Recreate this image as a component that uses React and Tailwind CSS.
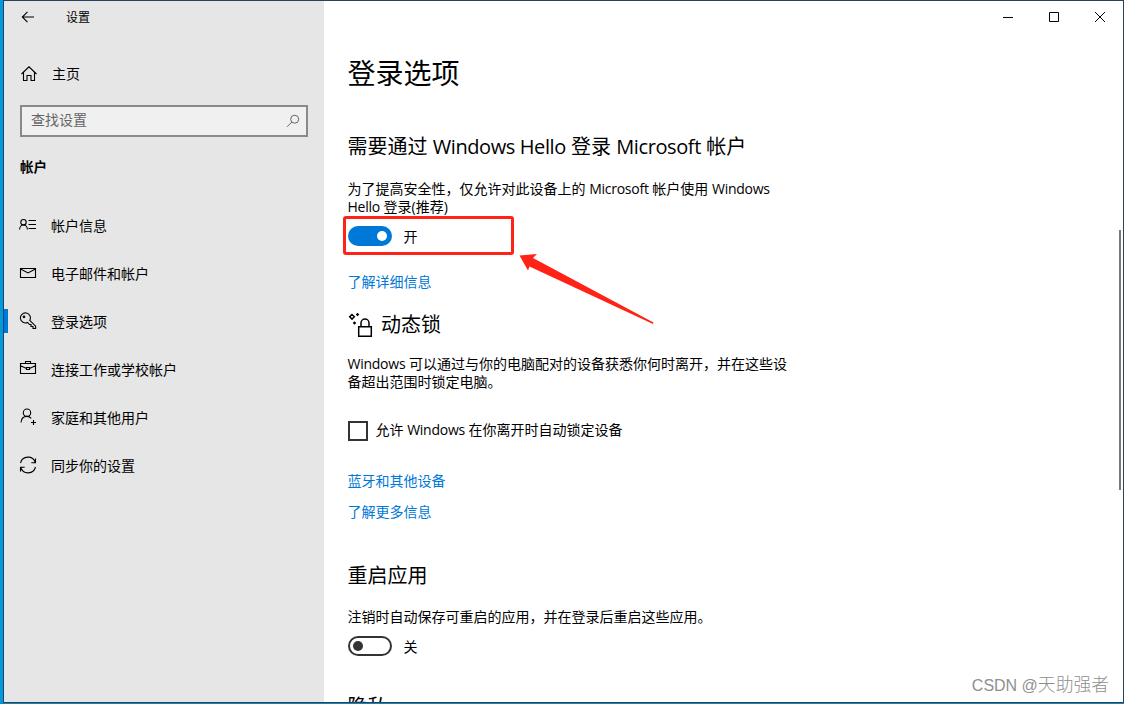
import React from "react";

const Icon = ({ children, className, box = 18, width = 1.1 }) => (
  <svg
    viewBox={`0 0 ${box} ${box}`}
    className={className}
    fill="none"
    stroke="currentColor"
    strokeWidth={width}
  >
    {children}
  </svg>
);

const En = ({ children }) => <span className="tracking-[-0.25px]">{children}</span>;
const EnHeading = ({ children }) => <span className="tracking-[-0.4px]">{children}</span>;

const navItems = [
  {
    label: "帐户信息",
    icon: (
      <>
        <circle cx="4.5" cy="6.2" r="2.7" />
        <path d="M.6 13.600c0-2.700 1.600-4.600 3.900-4.600s3.900 1.900 3.900 4.600M9.500 4.500H17M9.500 8.500H17M9.500 12.500H17" />
      </>
    ),
  },
  {
    label: "电子邮件和帐户",
    icon: <path d="M1.5 4.5h15v9h-15zM1.5 5l7.5 4 7.5-4" />,
  },
  {
    label: "登录选项",
    active: true,
    icon: (
      <>
        <path d="M10.8 8.3l5.8 5.9v2.3h-2.6v-2h-2v-2h-1.5l-1.9-2.1a5 5 0 1 1 2.2-2.1z" />
        <circle cx="5" cy="4.8" r="0.8" />
      </>
    ),
  },
  {
    label: "连接工作或学校帐户",
    icon: (
      <path d="M1.5 3.5h15v10h-15zM6.5 3.500v-2h5v2M1.5 5.800l6 2.700M16.500 5.800l-6 2.700M7.500 7.500h3v2h-3z" />
    ),
  },
  {
    label: "家庭和其他用户",
    icon: (
      <>
        <circle cx="8" cy="4.700" r="3.700" />
        <path d="M2 14.500c.2-3.500 2.500-6.100 6-6.100 1.800 0 3.200.8 4.200 2M14.500 12v5M12 14.500h5" />
      </>
    ),
  },
  {
    label: "同步你的设置",
    icon: (
      <path d="M1.500 7a7.700 7.700 0 0 1 14.800-.5M16.500 2.500v4.200h-4.200M16.500 11a7.700 7.700 0 0 1-14.800.5M1.500 15.500v-4.200h4.200" />
    ),
  },
];

function Sidebar() {
  return (
    <aside className="flex w-[320px] shrink-0 flex-col bg-[#e6e6e6]">
      <div className="flex h-8 items-center pl-[17px]">
        <Icon className="h-[14px] w-[14px]" box={14}>
          <path d="M13 7H1.500M6.500 1.800L1.300 7l5.200 5.200" />
        </Icon>
        <span className="ml-[31px] pt-px text-[12px] leading-4">设置</span>
      </div>
      <div className="mt-[25px] flex h-8 items-center pl-4">
        <Icon className="h-[18px] w-[18px]">
          <path d="M1.500 9L9 1.800 16.500 9M3.500 7.500v8h3.500v-5h4v5h3.500v-8" />
        </Icon>
        <span className="ml-[14px] text-[14px] leading-5">主页</span>
      </div>
      <div className="mx-4 mt-[15px] flex h-8 items-center justify-between border-2 border-[#8a8a8a] bg-[#f0f0f0] pl-[9px] pr-[6px]">
        <span className="pb-[2px] text-[14px] leading-5 text-[#666]">查找设置</span>
        <Icon className="h-[14px] w-[14px] text-[#666]" box={14} width={1}>
          <circle cx="8.700" cy="5.200" r="4" />
          <path d="M5.800 8L1 12.800" />
        </Icon>
      </div>
      <div className="mt-5 h-5 pl-4 text-[13.500px] font-bold leading-5">帐户</div>
      <nav className="mt-6 flex flex-col">
        {navItems.map((item) => (
          <div key={item.label} className="flex h-12 items-center">
            <span className={item.active ? "h-6 w-1 bg-[#0078d7]" : "h-6 w-1"} />
            <Icon className="ml-[11px] h-[18px] w-[18px]">{item.icon}</Icon>
            <span className="ml-[14px] pt-[2px] text-[14px] leading-5">{item.label}</span>
          </div>
        ))}
      </nav>
    </aside>
  );
}

function WindowControls() {
  return (
    <div className="flex h-8 shrink-0 justify-end">
      <div className="flex w-[46px] items-center justify-center">
        <svg viewBox="0 0 10 10" className="h-[10px] w-[10px]" stroke="#000" fill="none">
          <path d="M0 5.500h10" />
        </svg>
      </div>
      <div className="flex w-[46px] items-center justify-center">
        <svg viewBox="0 0 10 10" className="h-[10px] w-[10px]" stroke="#000" fill="none">
          <path d="M.5.500h9v9h-9z" />
        </svg>
      </div>
      <div className="flex w-[46px] items-center justify-center">
        <svg viewBox="0 0 10 10" className="h-[10px] w-[10px]" stroke="#000" fill="none">
          <path d="M0 0l10 10M10 0L0 10" />
        </svg>
      </div>
    </div>
  );
}

function Content() {
  return (
    <main className="relative flex min-w-0 flex-1 flex-col overflow-hidden bg-white">
      <WindowControls />
      <div className="flex flex-col pl-[23.500px] text-[14px] leading-[18px]">
        <h1 className="mt-5 text-[28px] leading-10">登录选项</h1>
        <h2 className="mt-10 text-[20px] leading-7">
          需要通过 <EnHeading>Windows Hello</EnHeading> 登录 <EnHeading>Microsoft</EnHeading> 帐户
        </h2>
        <p className="mt-[19px] whitespace-nowrap">
          为了提高安全性，仅允许对此设备上的 <En>Microsoft</En> 帐户使用 <En>Windows</En>
          <br />
          <En>Hello</En> 登录(推荐)
        </p>
        <div className="ml-[0.500px] mt-[10px] flex h-5 items-center gap-[11.500px]">
          <span className="flex h-5 w-11 items-center justify-end rounded-full bg-[#0078d7] pr-[5px]">
            <span className="h-[10px] w-[10px] rounded-full bg-white" />
          </span>
          <span className="pt-[2px]">开</span>
        </div>
        <a className="mt-[27px] text-[#0078d7]">了解详细信息</a>
        <div className="ml-[0.500px] mt-5 flex h-7 items-center gap-2">
          <svg viewBox="0 0 25 25" className="h-[25px] w-[25px]" fill="none" stroke="#000" strokeWidth="1.500">
            <path d="M10.700 13.700h12.600v9.600H10.700zM13 13.700V10a4 4 0 0 1 8 0v3.700" />
            <path d="M4 1.500l2.300 2.300L4 6.100 1.700 3.800z" />
            <path d="M9.500-.3l1.800 1.800-1.800 1.800-1.800-1.800zM6.500 8.200l1.800 1.800-1.800 1.800L4.700 10z" fill="#000" stroke="none" />
          </svg>
          <h2 className="text-[20px] leading-7">动态锁</h2>
        </div>
        <p className="mt-4 whitespace-nowrap">
          <En>Windows</En> 可以通过与你的电脑配对的设备获悉你何时离开，并在这些设
          <br />
          备超出范围时锁定电脑。
        </p>
        <div className="ml-[0.500px] mt-[30px] flex h-5 items-center gap-[7.500px]">
          <span className="h-5 w-5 border-2 border-[#333]" />
          <span className="pb-[2px]">
            允许 <En>Windows</En> 在你离开时自动锁定设备
          </span>
        </div>
        <a className="mt-[31px] text-[#0078d7]">蓝牙和其他设备</a>
        <a className="mt-[13px] text-[#0078d7]">了解更多信息</a>
        <h2 className="mt-[41px] text-[20px] leading-7">重启应用</h2>
        <p className="mt-[18px]">注销时自动保存可重启的应用，并在登录后重启这些应用。</p>
        <div className="ml-[0.500px] mt-[10px] flex h-5 items-center gap-[11.500px]">
          <span className="flex h-5 w-11 items-center rounded-full border-2 border-[#333] pl-[3px]">
            <span className="h-[10px] w-[10px] rounded-full bg-[#333]" />
          </span>
          <span className="pt-[2px]">关</span>
        </div>
        <h2 className="mt-[37px] text-[20px] leading-7">隐私</h2>
      </div>
      <div className="absolute right-[2px] top-[229px] h-[260px] w-[2px] bg-[#7a7a7a]" />
      <div className="absolute left-[19px] top-[215px] h-[39px] w-[171px] rounded-[3px] border-[3px] border-[#ff2216]" />
      <svg viewBox="0 0 140 74" className="absolute left-[194px] top-[252px] h-[74px] w-[140px]">
        <path d="M1.500 2.500L19 1 15 5 135.500 69.500 135 71 11.500 13.500 10 17.500z" fill="#ff2216" />
      </svg>
      <div className="absolute bottom-1 right-[14px] flex items-baseline whitespace-pre text-[17.800px] font-light leading-6 text-[#8f8f8f]">
        <span className="font-['Liberation_Sans'] text-[16px]">CSDN @</span>
        <span>天助强者</span>
      </div>
    </main>
  );
}

export default function App() {
  return (
    <div className="flex h-[704px] w-[1124px] overflow-hidden border-b border-[#1a84b8] bg-[#0099dd] pl-[3px] font-['Open_Sans','Noto_Sans_CJK_SC',sans-serif] text-black">
      <div className="flex min-w-0 flex-1 border border-[#24435c]">
        <Sidebar />
        <Content />
      </div>
    </div>
  );
}
